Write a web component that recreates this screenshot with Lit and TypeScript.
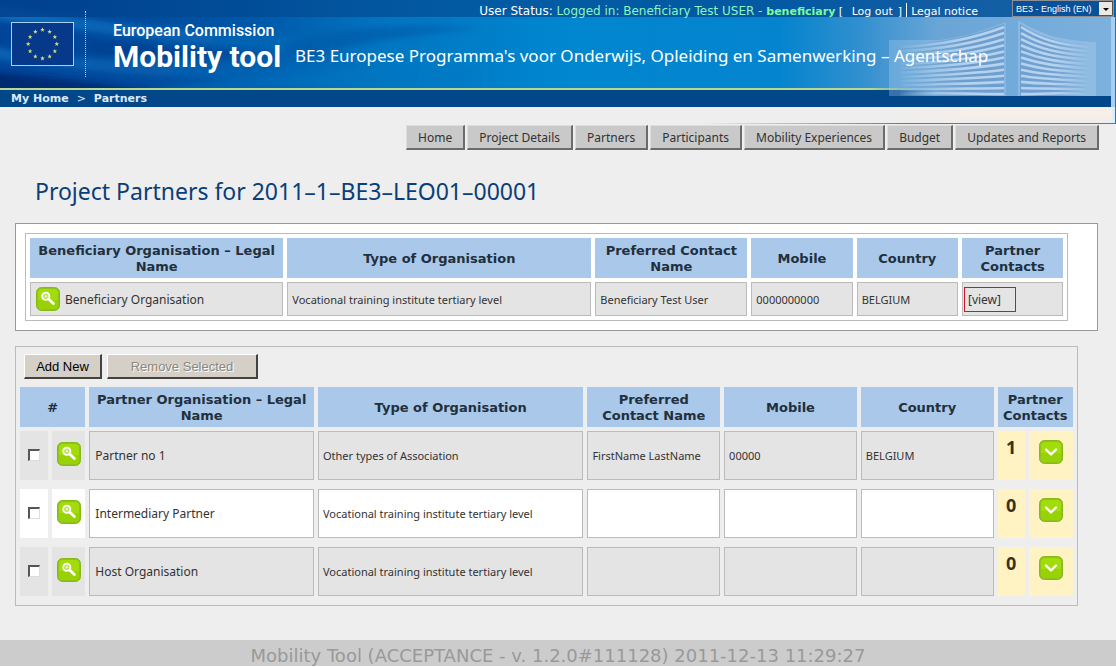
import { LitElement, html, svg, css } from "lit";
import { customElement } from "lit/decorators.js";

const NAV = ["Home", "Project Details", "Partners", "Participants", "Mobility Experiences", "Budget", "Updates and Reports"];

const PARTNERS = [
  { name: "Partner no 1", type: "Other types of Association", contact: "FirstName LastName", mobile: "00000", country: "BELGIUM", contacts: 1 },
  { name: "Intermediary Partner", type: "Vocational training institute tertiary level", contact: "", mobile: "", country: "", contacts: 0 },
  { name: "Host Organisation", type: "Vocational training institute tertiary level", contact: "", mobile: "", country: "", contacts: 0 },
];

const tile = svg`
  <rect x="0.5" y="0.5" width="23" height="23" rx="5" fill="#8fc31a" stroke="#86b81c"/>
  <rect x="2" y="2" width="20" height="20" rx="4" fill="#a2dc0a"/>
  <path d="M2 13h20v5a4 4 0 0 1-4 4H6a4 4 0 0 1-4-4z" fill="#98d204"/>`;

const viewIcon = html`<svg class="icon" width="24" height="24" viewBox="0 0 24 24" aria-hidden="true">
  ${tile}
  <circle cx="9.8" cy="9.2" r="3.6" fill="#b9e34d" stroke="#fff" stroke-width="1.8"/>
  <path d="M8.4 9.2h2.8M9.8 7.8v2.8" stroke="#fff" stroke-width="0.8"/>
  <path d="M12.8 12.2l4.6 4.4" stroke="#fff" stroke-width="2.8" stroke-linecap="round"/>
</svg>`;

const expandIcon = html`<svg class="icon" width="24" height="24" viewBox="0 0 24 24" aria-hidden="true">
  ${tile}
  <path d="M7 9.5l5 5 5-5" fill="none" stroke="#fff" stroke-width="2.4" stroke-linecap="round" stroke-linejoin="round"/>
</svg>`;

@customElement("site-header")
export class SiteHeader extends LitElement {
  static styles = css`
    :host { display: block; position: relative; color: #fff; font-family: "Noto Sans", "Open Sans", sans-serif; }
    .art { position: absolute; top: 0; left: 0; width: 100%; height: 124px; }
    .building { position: absolute; top: 0; right: 0; }
    .content { position: relative; display: flex; flex-direction: column; }
    .top { height: 17px; display: flex; justify-content: flex-end; align-items: flex-start; font: 11px/23px "DejaVu Sans", sans-serif; }
    .status { display: flex; white-space: pre; }
    .who { font-size: 12px; }
    .user { color: #8cf5c0; }
    .user b { color: #7dfa9c; font-size: 11px; }
    a { color: inherit; text-decoration: none; }
    .logout { padding: 0 5px; }
    .legal { border-left: 1px solid #fff; height: 14px; margin: 3px 34px 0 4px; padding-left: 4px; line-height: 17px; }
    .picker { position: relative; width: 102px; height: 17px; margin-right: 2px; }
    select { appearance: none; box-sizing: border-box; width: 100%; height: 17px; padding: 0 0 0 3px; margin: 0; border: 1px solid #8d8f94; border-radius: 0; background: #07509a; color: #fff; font: 9px "Liberation Sans", Arial, sans-serif; display: block; }
    .arrow { position: absolute; right: 1px; top: 2px; pointer-events: none; }
    .brand { height: 72px; display: flex; align-items: flex-start; }
    .flag { margin: 5px 0 0 11px; flex: none; }
    .rule { height: 66px; margin: -6px 27px 0 11px; border-left: 1px dotted #b5d5f4; }
    .names { width: 182px; white-space: nowrap; font-family: Roboto, sans-serif; font-weight: bold; }
    .ec { font-size: 16px; line-height: 20px; margin-top: 4px; font-weight: 500; }
    .mt { font-size: 30px; line-height: 32px; }
    .agency { font-size: 17px; line-height: 24px; padding-top: 27px; white-space: nowrap; }
    .crumbs { height: 17px; margin-top: 1px; padding-left: 11px; display: flex; gap: 8px; font: bold 11px/18px "DejaVu Sans", sans-serif; color: #dcebfa; }
    .crumbs span { font-weight: normal; }
  `;

  private louvers() {
    const rows = [];
    for (let i = 0; i < 12; i++) {
      const y = 27 + i * 6.1;
      const bend = 20 * (1 - i / 11);
      rows.push(svg`<path d="M200 ${y + bend}C245 ${y + bend - 2} 278 ${y + bend * 0.5} 304 ${y}"/>`);
      rows.push(svg`<path d="M321 ${y}C340 ${y + bend * 0.6} 358 ${y + bend - 2} 390 ${y + bend}"/>`);
    }
    return rows;
  }

  private stars() {
    return Array.from({ length: 12 }, (_, i) => {
      const a = (i * Math.PI) / 6;
      const x = 31.5 + 14.3 * Math.sin(a);
      const y = 22 - 14.3 * Math.cos(a);
      return svg`<path transform="translate(${x} ${y})" d="M0-2.4L.6-.7 2.3-.7 .9.4 1.5 2.1 0 1.1-1.5 2.1-.9.4-2.3-.7-.6-.7z"/>`;
    });
  }

  render() {
    return html`
      <svg class="art" viewBox="0 0 1116 124" preserveAspectRatio="none" aria-hidden="true">
        <defs>
          <linearGradient id="sky">
            <stop offset="0" stop-color="#00459a"/><stop offset="0.12" stop-color="#004a9c"/>
            <stop offset="0.23" stop-color="#0058a9"/><stop offset="0.34" stop-color="#0274bf"/>
            <stop offset="0.5" stop-color="#0086cf"/><stop offset="0.7" stop-color="#0584ce"/>
            <stop offset="0.77" stop-color="#318fcf"/><stop offset="0.84" stop-color="#6aa5d6"/><stop offset="1" stop-color="#7db1de"/>
          </linearGradient>
          <linearGradient id="ray"><stop offset="0" stop-color="#1d8ad6" stop-opacity="0.6"/><stop offset="1" stop-color="#0a8ad6" stop-opacity="0"/></linearGradient>
          <linearGradient id="line"><stop offset="0.78" stop-color="#b9d98c"/><stop offset="0.83" stop-color="#b9d98c" stop-opacity="0"/></linearGradient>
          <linearGradient id="top"><stop offset="0" stop-color="#00408d"/><stop offset="0.4" stop-color="#03549c"/><stop offset="1" stop-color="#02509a"/></linearGradient>
          <filter id="soft"><feGaussianBlur stdDeviation="3"/></filter>
        </defs>
        <rect width="1116" height="96" fill="url(#sky)"/>
        <g filter="url(#soft)">
          <path d="M-10 4C90 20 200 40 420 36L420 62C240 50 100 34-10 18z" fill="url(#ray)"/>
          <path d="M-10 46C100 66 240 66 460 58L460 84C240 84 110 76-10 58z" fill="url(#ray)" opacity="0.7"/>
          <path d="M120 96C200 82 300 70 480 66L480 92L300 96z" fill="#0277c4" opacity="0.4"/>
          <path d="M280 44C340 26 420 22 480 28C420 34 350 44 300 60z" fill="#024f9f" opacity="0.45"/>
          <path d="M90 40C140 46 200 50 280 52C200 58 140 58 90 54z" fill="#003a8c" opacity="0.6"/>
          <path d="M-10 72C60 78 110 84 190 98L-10 98z" fill="#001f66" opacity="0.75"/>
        </g>
        <rect width="1116" height="17" fill="url(#top)" opacity="0.85"/>
        <rect y="88" width="1116" height="2" fill="url(#line)"/>
        <rect y="90" width="900" height="17" fill="#03478b"/>
        <rect x="899" y="96" width="217" height="11" fill="#03478b"/>
      </svg>
      <svg class="building" width="416" height="124" viewBox="0 0 416 124" aria-hidden="true">
        <defs>
          <linearGradient id="fade"><stop offset="0.05" stop-color="#fff" stop-opacity="0"/><stop offset="0.4" stop-color="#fff"/><stop offset="0.82" stop-color="#fff"/><stop offset="1" stop-color="#fff" stop-opacity="0"/></linearGradient>
          <mask id="m"><rect x="185" y="17" width="205" height="79" fill="url(#fade)"/></mask>
          <linearGradient id="under"><stop offset="0" stop-color="#f9efe8" stop-opacity="0"/><stop offset="0.5" stop-color="#f8eee8"/></linearGradient>
          <linearGradient id="edge"><stop offset="0" stop-color="#4b7fae" stop-opacity="0"/><stop offset="0.5" stop-color="#4b7fae"/></linearGradient>
          <linearGradient id="barfade"><stop offset="0" stop-color="#03478b"/><stop offset="1" stop-color="#03478b" stop-opacity="0"/></linearGradient>
        </defs>
        <rect x="199" y="90" width="36" height="6" fill="url(#barfade)"/>
        <path d="M189 40H240C270 36 290 28 306 22V96H189z" fill="#b7d3ee" opacity="0.3"/>
        <path d="M318 20C340 34 362 41 396 42V96H318z" fill="#b7d3ee" opacity="0.35"/>
        <g mask="url(#m)">
          <path d="M189 46C240 44 280 34 304 24V96H189z" fill="#5f90c3" opacity="0.6"/>
          <path d="M320 24C345 40 365 44 390 44V96H320z" fill="#5f90c3" opacity="0.6"/>
          <g fill="none" stroke="#b5d2ef" stroke-width="2.6">${this.louvers()}</g>
        </g>
        <rect x="411" y="17" width="4" height="90" fill="#a9cdec"/>
        <rect x="190" y="107" width="222" height="12" fill="url(#under)"/>
        <rect x="0" y="123" width="415" height="1" fill="url(#edge)"/>
        <rect x="412" y="107" width="3" height="16" fill="#d9effb"/>
        <rect x="415" y="17" width="1" height="107" fill="#2a70ab"/>
      </svg>
      <div class="content">
        <div class="top">
          <div class="status"><span class="who">User Status: </span><span class="who user">Logged in: Beneficiary Test USER - <b>beneficiary</b></span><span> [ </span><a class="logout" href="#">Log out</a><span>]</span></div>
          <a class="legal" href="#">Legal notice</a>
          <div class="picker">
            <select aria-label="Language"><option>BE3 - English (EN)</option></select>
            <svg class="arrow" width="14" height="14" viewBox="0 0 14 14" aria-hidden="true"><rect width="14" height="14" fill="#ece9e2"/><path d="M13.5 0v13.5H0" fill="none" stroke="#55524c"/><path d="M4 6h6l-3 3z" fill="#000"/></svg>
          </div>
        </div>
        <div class="brand">
          <svg class="flag" width="63" height="44" viewBox="0 0 63 44" role="img" aria-label="European flag"><rect x="0.5" y="0.5" width="62" height="43" fill="#06398a" stroke="#a8d0f4"/><g fill="#dcdf7c">${this.stars()}</g></svg>
          <div class="rule"></div>
          <div class="names"><div class="ec">European Commission</div><div class="mt">Mobility tool</div></div>
          <div class="agency">BE3 Europese Programma's voor Onderwijs, Opleiding en Samenwerking – Agentschap</div>
        </div>
        <nav class="crumbs" aria-label="Breadcrumb"><a href="#">My Home</a><span>&gt;</span><a href="#">Partners</a></nav>
      </div>`;
  }
}

@customElement("app-root")
export class AppRoot extends LitElement {
  static styles = css`
    :host { display: block; background: #eee; color: #333; font-family: "Noto Sans", "Open Sans", sans-serif; }
    * { box-sizing: border-box; }
    a { color: inherit; text-decoration: none; }
    .nav { position: relative; display: flex; justify-content: flex-end; gap: 2px; margin: 18px 17px 0 0; }
    .nav a { display: block; height: 25px; padding: 0 11px; background: #c9c9c9; border: solid; border-width: 1px 2px 2px 1px; border-color: #ddd #6b6b6b #6b6b6b #ddd; font-size: 12px; line-height: 23px; white-space: nowrap; }
    h1 { margin: 25px 0 16px 35px; font-size: 23px; line-height: 32px; font-weight: normal; color: #093e78; }
    main { padding: 0 18px 34px 15px; }
    .beneficiary { padding: 9px; border: 1px solid #999; background: #fff; }
    .partners { width: 98.15%; margin-top: 15px; border: 1px solid #bbb; }
    table { table-layout: fixed; width: 100%; border-spacing: 4px; font-size: 11px; }
    .beneficiary table { width: 98.15%; border: 1px solid #bbb; }
    .w10 { width: 10%; } .w13 { width: 13%; } .w15 { width: 15%; } .w22 { width: 22%; }
    .w25 { width: 25%; } .w26 { width: 26%; } .w30 { width: 30%; }
    .c-check { width: 28px; } .c-view { width: 33px; } .c-count { width: 27px; } .c-open { width: 44px; }
    th { height: 40px; padding: 5px 2px 3px; background: #a9c8ea; color: #222f3c; font: bold 13px/16px "DejaVu Sans", sans-serif; }
    td { height: 34px; padding: 0 4px; border: 1px solid #bbb; background: #e4e4e4; }
    .name { padding: 0 5px; font-size: 12px; }
    .with-icon { display: flex; align-items: center; gap: 5px; }
    .icon { display: block; }
    .view { display: block; width: 52px; padding: 0 3px; border: 1px solid #d0142c; font-size: 12px; line-height: 23px; }
    .view-cell { padding: 0 1px; }
    .partners td { height: 49px; }
    .alt td { background: #fff; }
    .partners td.plain { border: 0; padding: 0 0 4px; text-align: center; }
    .partners td.hot { border: 0; padding: 9px 0 0; background: #fff3c4; text-align: center; vertical-align: top; }
    .partners td.count { padding-top: 4px; font-size: 18px; line-height: 24px; font-weight: bold; color: #3a3020; }
    .partners tr.detail td { height: 1px; padding: 0; border: 0; background: none; }
    input[type="checkbox"] { appearance: none; display: inline-block; width: 12px; height: 12px; margin: 0; border: solid; border-width: 2px 1px 1px 2px; border-color: #555 #ddd #ddd #555; background: #fff; vertical-align: middle; }
    .iconbtn { display: inline-block; margin: 0; padding: 0; border: 0; background: none; vertical-align: middle; }
    .actions { display: flex; gap: 5px; padding: 7px 8px 4px; }
    .btn { height: 25px; padding: 0; min-width: 78px; border: solid; border-width: 1px 2px 2px 1px; border-color: #fff #45423d #45423d #fff; border-radius: 0; background: #d4d0c8; color: #000; font: 13px "Liberation Sans", Arial, sans-serif; }
    .btn:disabled { min-width: 151px; color: #8a8780; text-shadow: 1px 1px 0 #fff; }
    footer { height: 26px; background: #ccc; color: #999; text-align: center; font: 18px/31px "DejaVu Sans", sans-serif; overflow: hidden; }
  `;

  render() {
    return html`
      <site-header></site-header>
      <nav class="nav" aria-label="Main">${NAV.map((n) => html`<a href="#">${n}</a>`)}</nav>
      <h1>Project Partners for 2011–1–BE3–LEO01–00001</h1>
      <main>
        <section class="beneficiary">
          <table>
            <colgroup><col class="w25"><col class="w30"><col class="w15"><col class="w10"><col class="w10"><col class="w10"></colgroup>
            <thead><tr><th>Beneficiary Organisation – Legal Name</th><th>Type of Organisation</th><th>Preferred Contact Name</th><th>Mobile</th><th>Country</th><th>Partner Contacts</th></tr></thead>
            <tbody><tr>
              <td class="name"><div class="with-icon"><button class="iconbtn" aria-label="View Beneficiary Organisation">${viewIcon}</button>Beneficiary Organisation</div></td>
              <td>Vocational training institute tertiary level</td><td>Beneficiary Test User</td><td>0000000000</td><td>BELGIUM</td>
              <td class="view-cell"><a class="view" href="#">[view]</a></td>
            </tr></tbody>
          </table>
        </section>
        <section class="partners">
          <div class="actions"><button class="btn">Add New</button><button class="btn" disabled>Remove Selected</button></div>
          <table>
            <colgroup><col class="c-check"><col class="c-view"><col class="w22"><col class="w26"><col class="w13"><col class="w13"><col class="w13"><col class="c-count"><col class="c-open"></colgroup>
            <thead><tr><th colspan="2">#</th><th>Partner Organisation – Legal Name</th><th>Type of Organisation</th><th>Preferred Contact Name</th><th>Mobile</th><th>Country</th><th colspan="2">Partner Contacts</th></tr></thead>
            <tbody>${PARTNERS.map((p, i) => html`
              <tr class=${i % 2 ? "alt" : ""}>
                <td class="plain"><input type="checkbox" aria-label="Select ${p.name}"></td>
                <td class="plain"><button class="iconbtn" aria-label="View ${p.name}">${viewIcon}</button></td>
                <td class="name">${p.name}</td><td>${p.type}</td><td>${p.contact}</td><td>${p.mobile}</td><td>${p.country}</td>
                <td class="hot count">${p.contacts}</td>
                <td class="hot"><button class="iconbtn" aria-label="Show contacts of ${p.name}">${expandIcon}</button></td>
              </tr>
              <tr class="detail"><td colspan="9"></td></tr>`)}
            </tbody>
          </table>
        </section>
      </main>
      <footer>Mobility Tool (ACCEPTANCE - v. 1.2.0#111128) 2011-12-13 11:29:27</footer>`;
  }
}
